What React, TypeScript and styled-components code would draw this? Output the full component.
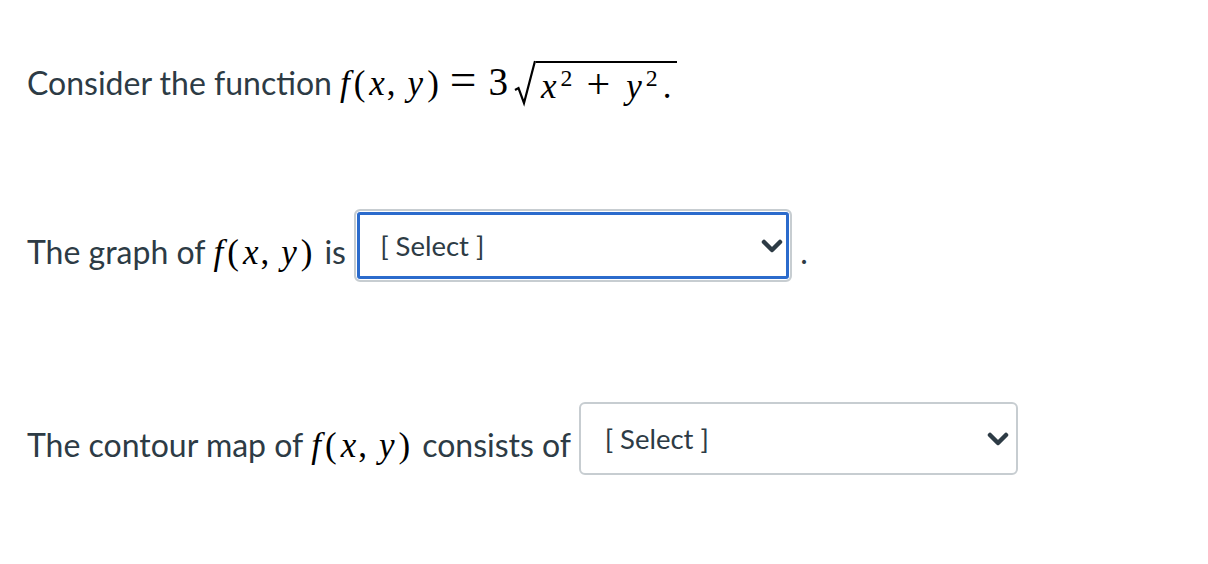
import React from "react";
import styled, { createGlobalStyle } from "styled-components";

const GlobalStyle = createGlobalStyle`
  html, body {
    margin: 0;
    padding: 0;
    background: #ffffff;
  }
  body {
    font-family: Lato, "Noto Sans", "Liberation Sans", sans-serif;
    color: #2d3b45;
  }
`;

const Page = styled.div`
  width: 1208px;
  height: 564px;
  box-sizing: border-box;
  padding: 56px 0 0 27px;
  overflow: hidden;
`;

interface SpaceProps {
  $space?: number;
}

const Para = styled.p<SpaceProps>`
  margin: ${(p) => (p.$space ? p.$space : 0)}px 0 0 0;
  font-size: 32px;
  line-height: 45px;
  white-space: nowrap;
`;

const Math = styled.span`
  font-family: "Liberation Serif", "Times New Roman", serif;
  font-size: 35px;
  color: #000;
  margin: 0 10px 0 6px;
`;

const Mi = styled.span`
  font-family: "Liberation Serif", "Times New Roman", serif;
  font-style: italic;
  margin: 0 2px;
`;

interface MoProps {
  $gap?: number;
  $scale?: number;
}

const Mo = styled.span<MoProps>`
  font-style: normal;
  font-size: ${(p) => (p.$scale ? p.$scale : 1)}em;
  line-height: 1;
  margin: 0 ${(p) => (p.$gap !== undefined ? p.$gap : 2)}px;
`;

const Sup = styled.sup`
  font-size: 0.68em;
  font-style: normal;
  vertical-align: 0.52em;
  line-height: 0;
  margin-left: 2px;
`;

const Root = styled.span`
  display: inline-flex;
  align-items: flex-end;
  vertical-align: -12px;
  margin-left: 3px;
  line-height: 1;
`;

const Radicand = styled.span`
  border-top: 2px solid #000;
  padding: 0 1px 0 3px;
  line-height: 41px;
`;

const SelectBox = styled.div<{ $focused?: boolean; $width: number }>`
  display: inline-flex;
  align-items: center;
  justify-content: space-between;
  box-sizing: border-box;
  width: ${(p) => p.$width}px;
  height: 73px;
  padding: 0 7px 0 24px;
  border: 2px solid #c7cdd1;
  border-radius: 6px;
  background: #fff;
  vertical-align: 8px;
  box-shadow: ${(p) =>
    p.$focused ? "inset 0 0 0 1px #fff, inset 0 0 0 4px #2b6bcc" : "none"};
  font-size: 27.5px;
  line-height: 36px;
  color: #2d3b45;
`;

const Chevron = () => (
  <svg width="22" height="14" viewBox="0 0 22 14">
    <polyline
      points="3,3 11,11 19,3"
      fill="none"
      stroke="#2d3b45"
      strokeWidth="4.5"
      strokeLinecap="round"
      strokeLinejoin="round"
    />
  </svg>
);

const RadicalSign = () => (
  <svg width="22" height="47" viewBox="0 0 22 47">
    <path
      d="M1 30 L4.5 28 L10 43 L21 1"
      fill="none"
      stroke="#000"
      strokeWidth="2.2"
      strokeLinejoin="miter"
    />
  </svg>
);

const Fxy = () => (
  <>
    <Mi>f</Mi>
    <Mo $gap={2}>(</Mo>
    <Mi>x</Mi>
    <Mo $gap={0}>,</Mo>
    <Mo $gap={5} />
    <Mi>y</Mi>
    <Mo $gap={2}>)</Mo>
  </>
);

const Select: React.FC<{ focused?: boolean; width: number }> = ({ focused, width }) => (
  <SelectBox $focused={focused} $width={width}>
    <span>[ Select ]</span>
    <Chevron />
  </SelectBox>
);

export default function App() {
  return (
    <>
      <GlobalStyle />
      <Page>
        <Para>
          Consider the function
          <Math>
            <Fxy />
            <Mo $gap={9} $scale={1.35}>=</Mo>
            <Mo $gap={3} $scale={1.12}>3</Mo>
            <Root>
              <RadicalSign />
              <Radicand>
                <Mi>x</Mi>
                <Sup>2</Sup>
                <Mo $gap={14} $scale={1.2}>+</Mo>
                <Mi>y</Mi>
                <Sup>2</Sup>
                <Mo $gap={5}>.</Mo>
              </Radicand>
            </Root>
          </Math>
        </Para>
        <Para $space={102}>
          The graph of
          <Math>
            <Fxy />
          </Math>
          is <Select focused width={438} /> .
        </Para>
        <Para $space={120}>
          The contour map of
          <Math>
            <Fxy />
          </Math>
          consists of <Select width={439} />
        </Para>
      </Page>
    </>
  );
}
